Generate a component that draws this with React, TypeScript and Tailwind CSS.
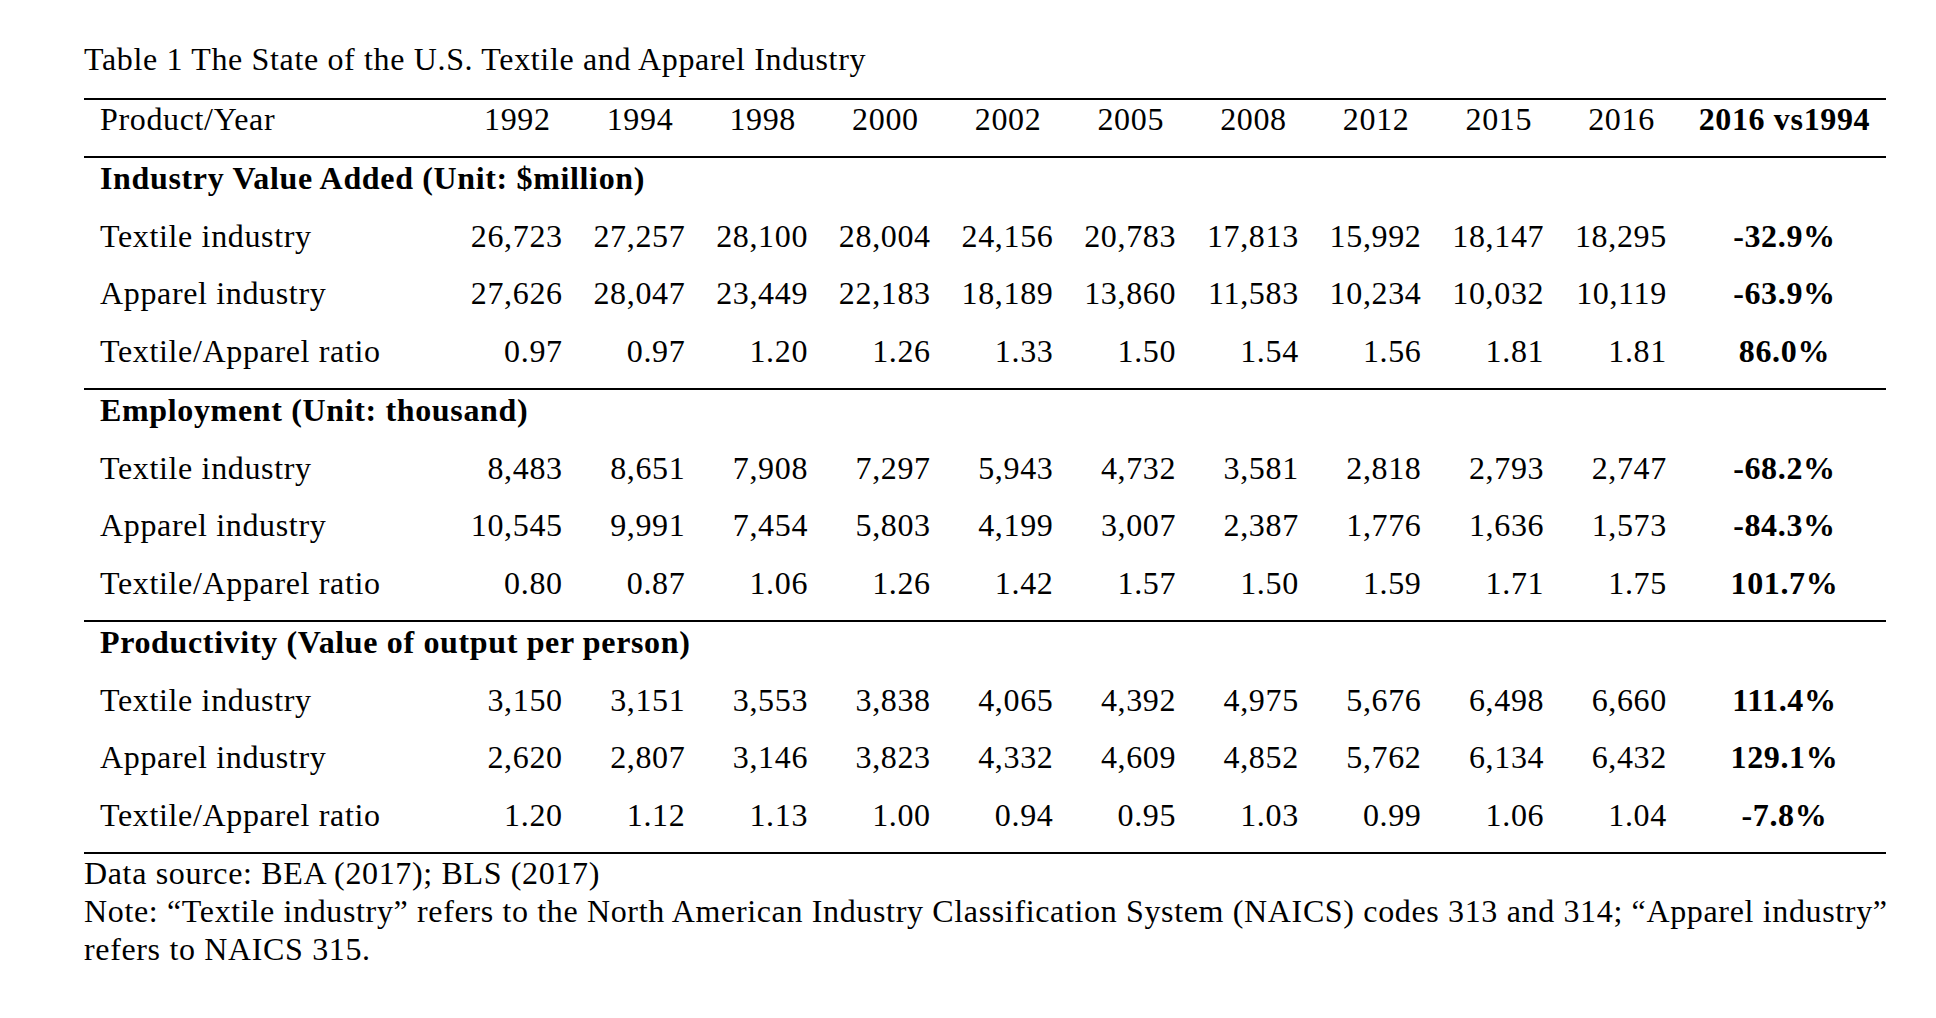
import React from "react";

type Row = { label: string; values: string[]; change: string };
type Section = { title: string; rows: Row[] };

const years = ["1992", "1994", "1998", "2000", "2002", "2005", "2008", "2012", "2015", "2016"];

const sections: Section[] = [
  {
    title: "Industry Value Added (Unit: $million)",
    rows: [
      { label: "Textile industry", values: ["26,723", "27,257", "28,100", "28,004", "24,156", "20,783", "17,813", "15,992", "18,147", "18,295"], change: "-32.9%" },
      { label: "Apparel industry", values: ["27,626", "28,047", "23,449", "22,183", "18,189", "13,860", "11,583", "10,234", "10,032", "10,119"], change: "-63.9%" },
      { label: "Textile/Apparel ratio", values: ["0.97", "0.97", "1.20", "1.26", "1.33", "1.50", "1.54", "1.56", "1.81", "1.81"], change: "86.0%" },
    ],
  },
  {
    title: "Employment (Unit: thousand)",
    rows: [
      { label: "Textile industry", values: ["8,483", "8,651", "7,908", "7,297", "5,943", "4,732", "3,581", "2,818", "2,793", "2,747"], change: "-68.2%" },
      { label: "Apparel industry", values: ["10,545", "9,991", "7,454", "5,803", "4,199", "3,007", "2,387", "1,776", "1,636", "1,573"], change: "-84.3%" },
      { label: "Textile/Apparel ratio", values: ["0.80", "0.87", "1.06", "1.26", "1.42", "1.57", "1.50", "1.59", "1.71", "1.75"], change: "101.7%" },
    ],
  },
  {
    title: "Productivity (Value of output per person)",
    rows: [
      { label: "Textile industry", values: ["3,150", "3,151", "3,553", "3,838", "4,065", "4,392", "4,975", "5,676", "6,498", "6,660"], change: "111.4%" },
      { label: "Apparel industry", values: ["2,620", "2,807", "3,146", "3,823", "4,332", "4,609", "4,852", "5,762", "6,134", "6,432"], change: "129.1%" },
      { label: "Textile/Apparel ratio", values: ["1.20", "1.12", "1.13", "1.00", "0.94", "0.95", "1.03", "0.99", "1.06", "1.04"], change: "-7.8%" },
    ],
  },
];

const grid = "grid grid-cols-[372px_repeat(10,122.7px)_1fr]";

function Rule() {
  return <div className="h-[2px] bg-black" />;
}

export default function App() {
  return (
    <div className="min-h-[1018px] w-[1936px] bg-white text-black font-['Liberation_Serif','Times_New_Roman',serif] text-[32px] tracking-[0.65px]">
      <div className="ml-[84px] w-[1802px] pt-[40px]">
        <div className="leading-[38px] mb-[20px] whitespace-nowrap">
          Table 1 The State of the U.S. Textile and Apparel Industry
        </div>
        <Rule />
        <div className={`${grid} h-[56px] pt-[3px] leading-[32px]`}>
          <div className="pl-[16px]">Product/Year</div>
          {years.map((y) => (
            <div key={y} className="text-center">
              {y}
            </div>
          ))}
          <div className="text-center font-bold whitespace-nowrap">2016 vs1994</div>
        </div>
        <Rule />
        {sections.map((s, si) => (
          <div key={si}>
            <div className="h-[57.5px] pt-[4px] leading-[32px] pl-[16px] font-bold whitespace-nowrap">
              {s.title}
            </div>
            {s.rows.map((r, ri) => (
              <div key={ri} className={`${grid} h-[57.5px] pt-[4px] leading-[32px]`}>
                <div className="pl-[16px] whitespace-nowrap">{r.label}</div>
                {r.values.map((v, vi) => (
                  <div key={vi} className="text-right pr-[16px] whitespace-nowrap">
                    {v}
                  </div>
                ))}
                <div className="text-center font-bold whitespace-nowrap">{r.change}</div>
              </div>
            ))}
            <Rule />
          </div>
        ))}
        <div className="leading-[38px]">
          <div className="whitespace-nowrap">Data source: BEA (2017); BLS (2017)</div>
          <div className="whitespace-nowrap">
            Note: “Textile industry” refers to the North American Industry Classification System (NAICS) codes 313 and 314; “Apparel industry”
          </div>
          <div className="whitespace-nowrap">refers to NAICS 315.</div>
        </div>
      </div>
    </div>
  );
}
